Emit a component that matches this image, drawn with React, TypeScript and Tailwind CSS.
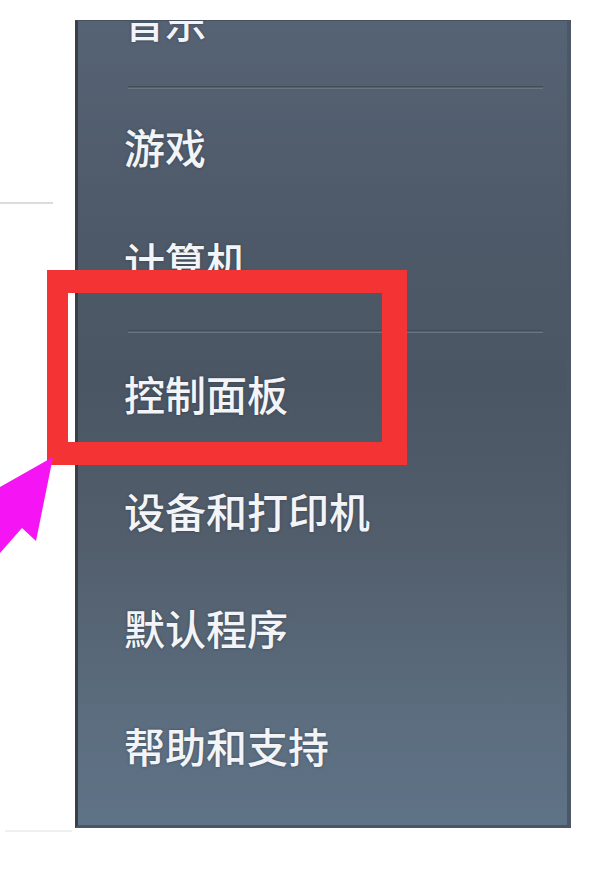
import React from "react";

type Entry = { kind: "item"; label: string; mt: string } | { kind: "sep"; mt: string };

const entries: Entry[] = [
  { kind: "item", label: "音乐", mt: "mt-[-21px]" },
  { kind: "sep", mt: "mt-[45px]" },
  { kind: "item", label: "游戏", mt: "mt-[37px]" },
  { kind: "item", label: "计算机", mt: "mt-[73px]" },
  { kind: "sep", mt: "mt-[49px]" },
  { kind: "item", label: "控制面板", mt: "mt-[40px]" },
  { kind: "item", label: "设备和打印机", mt: "mt-[76px]" },
  { kind: "item", label: "默认程序", mt: "mt-[76px]" },
  { kind: "item", label: "帮助和支持", mt: "mt-[77px]" },
];

export default function App() {
  return (
    <div
      className="relative w-[600px] h-[872px] bg-white overflow-hidden"
      style={{ fontFamily: '"Noto Sans CJK SC", "Noto Sans", sans-serif' }}
    >
      <div className="flex">
        {/* left white area of the start menu */}
        <div className="w-[75px] flex flex-col">
          <div className="mt-[202px] h-[2px] w-[53px] bg-[#dcdcdc]" />
          <div className="mt-[626px] ml-[5px] h-[2px] w-[67px] bg-[#f0f0f0]" />
        </div>

        {/* right dark pane */}
        <div className="mt-[20px] w-[496px] h-[808px] overflow-hidden border-l-[3px] border-l-[#3a3f47] border-t border-t-[#465160] border-r-[4px] border-r-[#4c5868] border-b-[3px] border-b-[#4a5666] bg-[linear-gradient(180deg,#566374_0%,#4e5a69_25%,#4b5664_45%,#525e6c_65%,#5c6e80_88%,#5f7386_100%)]">
          <div className="flex flex-col">
            {entries.map((e, i) =>
              e.kind === "item" ? (
                <div
                  key={i}
                  className={`${e.mt} pl-[46px] h-[41px] text-[41px] leading-[41px] font-medium text-[#f2f4f7] whitespace-nowrap [text-shadow:0_0_3px_rgba(20,30,40,0.45)]`}
                >
                  {e.label}
                </div>
              ) : (
                <div
                  key={i}
                  className={`${e.mt} ml-[50px] w-[415px] h-[3px] border-t border-t-[#434d5a] border-b border-b-[#6a7583] bg-[#56616f]`}
                />
              )
            )}
          </div>
        </div>
      </div>

      {/* red highlight box */}
      <div className="absolute left-[47px] top-[270px] w-[360px] h-[195px] border-[#f43434] border-t-[23px] border-l-[21px] border-r-[25px] border-b-[23px]" />

      {/* magenta arrow */}
      <svg className="absolute left-0 top-0" width="600" height="872" viewBox="0 0 600 872">
        <polygon points="53,457 36,541 22,528 0,553 0,487" fill="#f514f3" />
      </svg>
    </div>
  );
}
